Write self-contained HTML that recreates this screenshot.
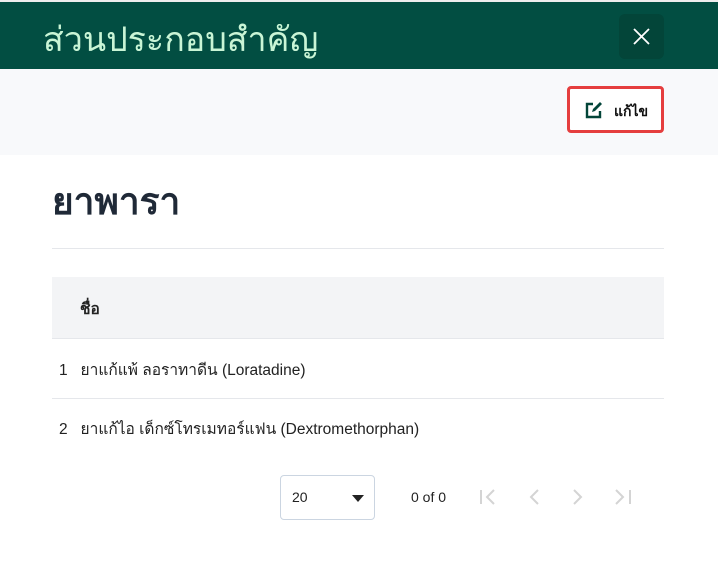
<!DOCTYPE html>
<html><head><meta charset="utf-8"><style>
*{margin:0;padding:0;box-sizing:border-box}
body{width:718px;height:585px;background:#fff;font-family:"Liberation Sans","Noto Sans CJK SC",sans-serif;position:relative;overflow:hidden;color:#1f2937}
.hdr{position:absolute;left:0;top:0;width:718px;height:69px;background:#024e42;border-top:2px solid #eee}
.hdr h1{position:absolute;left:43px;top:10px;font-size:34px;font-weight:normal;color:#c9f5d6}
.x{position:absolute;left:619px;top:12px;width:45px;height:45px;background:#034539;border-radius:6px}
.bar{position:absolute;left:0;top:69px;width:718px;height:86px;background:#f8f9fb}
.edit{position:absolute;left:567px;top:86px;width:97px;height:47px;border:3px solid #e53e3e;border-radius:4px;background:#fff;font-weight:bold;font-size:14px;color:#111}
.t{position:absolute;font-size:15.5px;color:#222}
</style></head><body>
<div class="hdr"><h1>ส่วนประกอบสำคัญ</h1>
<div class="x"><svg width="45" height="45" viewBox="0 0 45 45"><path d="M15 15L30 30M30 15L15 30" stroke="#fff" stroke-width="1.8"/></svg></div></div>
<div class="bar"></div>
<div class="edit"><svg style="position:absolute;left:15px;top:12px" width="18" height="18" viewBox="0 0 18 18"><path d="M8 3H2v13h13v-6" fill="none" stroke="#034539" stroke-width="2.4"/><path d="M7 11l1-3 7-7 2 2-7 7z" fill="#034539"/></svg><span style="position:absolute;left:44px;top:12px">แก้ไข</span></div>
<div style="position:absolute;left:52px;top:172px;font-size:37px;font-weight:bold;color:#1f2937">ยาพารา</div>
<div style="position:absolute;left:52px;top:248px;width:612px;height:1px;background:#e5e7eb"></div>
<div style="position:absolute;left:52px;top:277px;width:612px;height:62px;background:#f3f4f6;border-bottom:1px solid #e5e7eb"></div>
<div class="t" style="left:80px;top:296px;font-weight:bold">ชื่อ</div>
<div class="t" style="left:59px;top:357px">1&nbsp;&nbsp; ยาแก้แพ้ ลอราทาดีน (Loratadine)</div>
<div style="position:absolute;left:52px;top:398px;width:612px;height:1px;background:#e5e7eb"></div>
<div class="t" style="left:59px;top:416px">2&nbsp;&nbsp; ยาแก้ไอ เด็กซ์โทรเมทอร์แฟน (Dextromethorphan)</div>
<div style="position:absolute;left:280px;top:475px;width:95px;height:45px;border:1px solid #cbd5e1;border-radius:4px"><span class="t" style="left:11px;top:13px;font-size:14px">20</span><svg style="position:absolute;left:71px;top:19px" width="12" height="7"><path d="M0 0h12L6 7z" fill="#222"/></svg></div>
<div class="t" style="left:411px;top:489px;font-size:14px">0 of 0</div>
<svg style="position:absolute;left:478px;top:487px" width="160" height="20" viewBox="0 0 160 20" fill="none" stroke="#d4d4d4" stroke-width="2"><path d="M3 3v14M16 3l-7 7 7 7"/><path d="M60 3l-7 7 7 7"/><path d="M96 3l7 7-7 7"/><path d="M138 3l7 7-7 7M152 3v14"/></svg>
</body></html>
